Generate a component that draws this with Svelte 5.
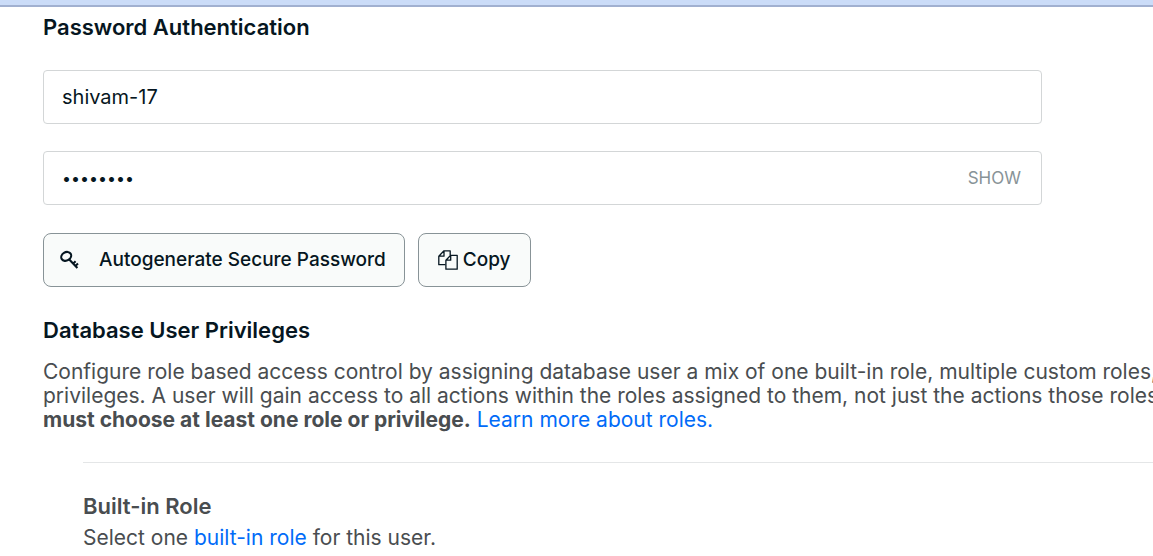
<script>
  let username = $state('shivam-17');
  let password = $state('password');
  let visible = $state(false);

  function generate() {
    password = Array.from(crypto.getRandomValues(new Uint8Array(8)), (n) => (n % 36).toString(36)).join('');
  }

  function copy() {
    navigator.clipboard?.writeText(password);
  }
</script>

<div class="topbar"></div>

<main>
  <section class="auth">
    <h2>Password Authentication</h2>
    <div class="field">
      <input type="text" aria-label="Username" autocomplete="off" bind:value={username} />
    </div>
    <div class="field">
      <input type={visible ? 'text' : 'password'} class:secret={!visible} aria-label="Password" autocomplete="off" bind:value={password} />
      <button class="show" type="button" onclick={() => (visible = !visible)}>{visible ? 'HIDE' : 'SHOW'}</button>
    </div>
    <div class="actions">
      <button class="btn generate" type="button" onclick={generate}>
        <svg width="20" height="20" viewBox="0 0 20 20" fill="none" stroke="currentColor" stroke-width="2.1" aria-hidden="true">
          <ellipse cx="6.2" cy="6.4" rx="5.2" ry="4.2" transform="rotate(-32 6.2 6.4)" />
          <path d="M9 9.3 17.4 18M13.2 13.4l2.4-2.2M15.6 15.8l2.4-2.2" />
        </svg>
        <span>Autogenerate Secure Password</span>
      </button>
      <button class="btn copy" type="button" onclick={copy}>
        <svg width="20" height="20" viewBox="0 0 20 20" fill="none" stroke="currentColor" stroke-width="1.3" stroke-linejoin="round" aria-hidden="true">
          <path d="M7.5 14.7H.8V6.2L6 .8h6.2v4.5M6 .8v5.4H.8" />
          <path d="M12.7 5.3h6.5v13.9H7.9v-9zM12.7 5.3v4.9H7.9" />
        </svg>
        <span>Copy</span>
      </button>
    </div>
  </section>

  <section class="privileges">
    <h2>Database User Privileges</h2>
    <p class="intro">
      Configure role based access control by assigning database user a mix of one built-in role, multiple custom roles, a<br />
      privileges. A user will gain access to all actions within the roles assigned to them, not just the actions those roles s<br />
      <strong>must choose at least one role or privilege.</strong> <a href="#roles">Learn more about roles.</a>
    </p>
    <div class="role">
      <h3>Built-in Role</h3>
      <p>Select one <a href="#built-in">built-in role</a> for this user.</p>
    </div>
  </section>
</main>

<style>
  :global(body) {
    margin: 0;
    background: #fff;
    overflow: hidden;
  }
  .topbar {
    height: 5px;
    background: #cbdcf8;
    border-bottom: 2px solid #a1b0d0;
  }
  main {
    padding: 4px 0 4px 43px;
    font-family: Inter, 'Open Sans', sans-serif;
    font-size: 21px;
    line-height: 24px;
    color: #494d50;
  }
  h2, h3, p {
    margin: 0;
  }
  h2, h3 {
    font-size: 22px;
    line-height: 32px;
    font-weight: 600;
  }
  h2 {
    color: #061621;
  }
  .auth {
    margin-right: 111px;
  }
  .field {
    display: flex;
    align-items: center;
    box-sizing: border-box;
    height: 54px;
    margin-top: 27px;
    padding: 0 20px 0 18px;
    border: 1px solid #d3d6d7;
    border-radius: 4px;
  }
  input {
    flex: 1;
    min-width: 0;
    padding: 0;
    border: 0;
    outline: 0;
    background: none;
    font: inherit;
    font-size: 20px;
    color: #061621;
  }
  .secret {
    font-size: 16px;
  }
  .show {
    padding: 0;
    border: 0;
    background: none;
    font: inherit;
    font-size: 17px;
    color: #889397;
  }
  .actions {
    display: flex;
    gap: 13px;
    margin-top: 28px;
  }
  .btn {
    display: flex;
    align-items: center;
    box-sizing: border-box;
    height: 54px;
    padding: 0 18px 0 16px;
    border: 1px solid #889397;
    border-radius: 8px;
    background: #f9fbfa;
    font: inherit;
    font-size: 19px;
    font-weight: 500;
    color: #061621;
    white-space: nowrap;
  }
  .generate {
    gap: 19px;
  }
  .copy {
    gap: 5px;
    padding: 0 19px;
  }
  .privileges {
    margin-top: 27px;
  }
  .intro {
    margin-top: 14px;
    white-space: nowrap;
  }
  a {
    color: #016bf8;
    text-decoration: none;
  }
  .role {
    margin: 30px 0 0 40px;
    padding-top: 27px;
    border-top: 1px solid #e4e6e7;
  }
  .role p {
    margin-top: 4px;
  }
</style>
